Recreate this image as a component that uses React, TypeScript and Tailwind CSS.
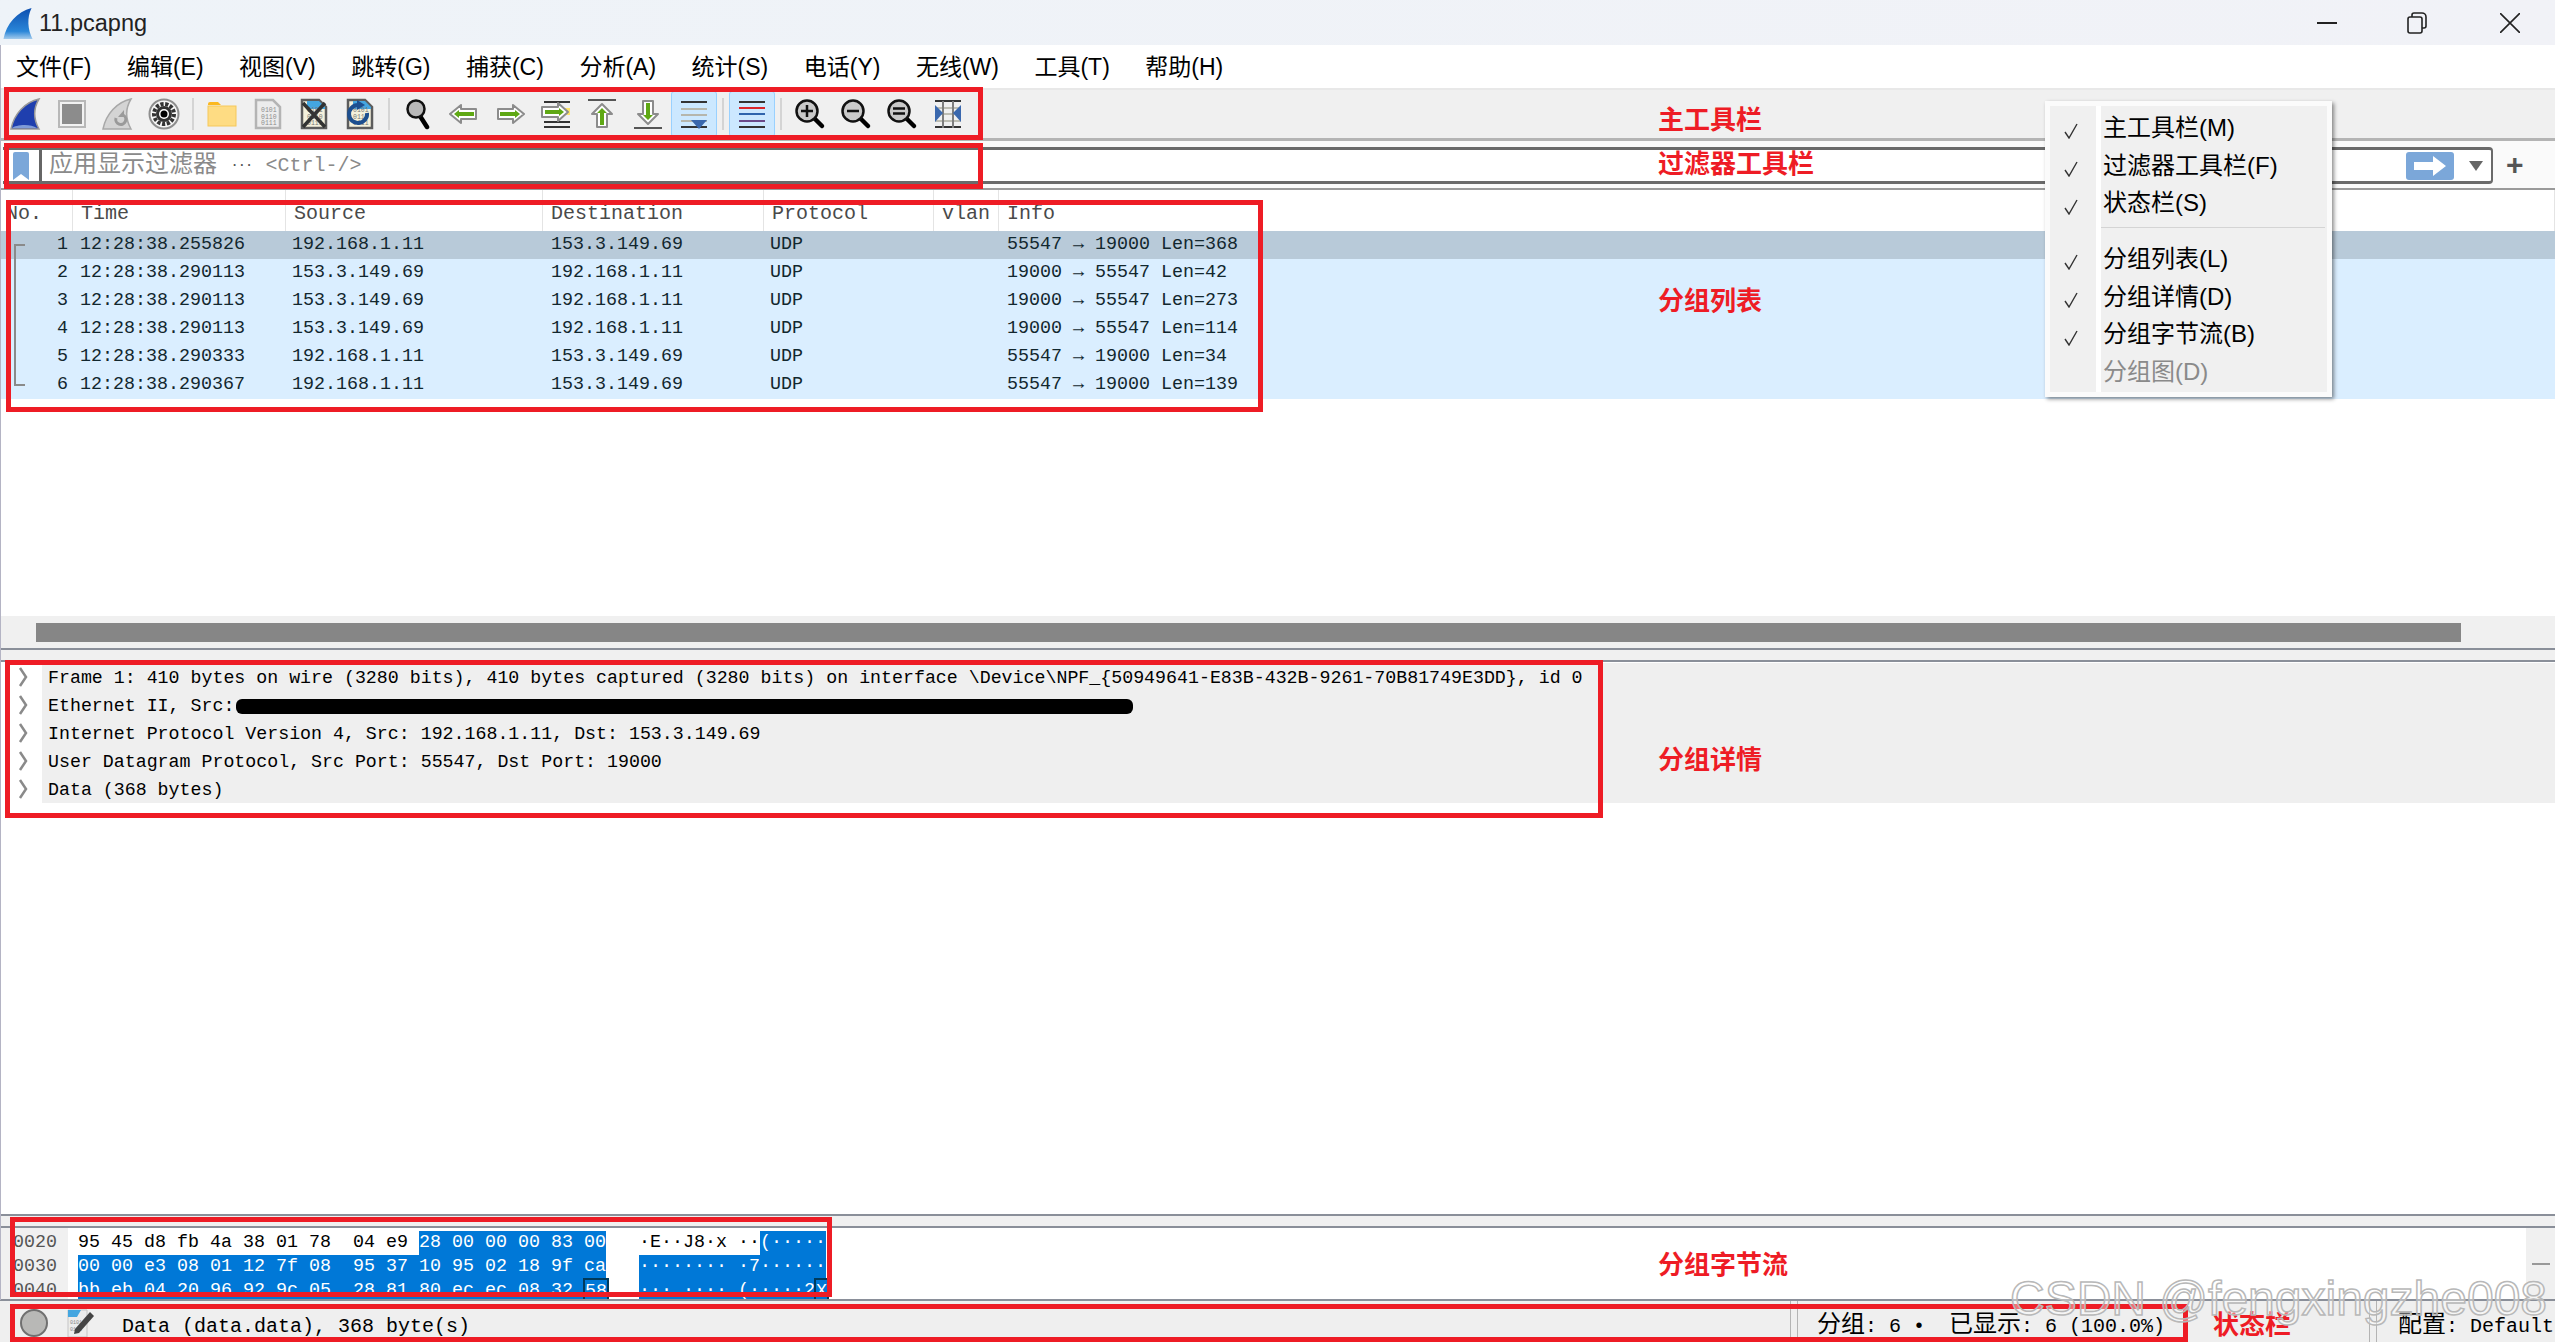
import type { ReactNode } from "react";

const MONO = "font-['Liberation_Mono','Noto_Sans_CJK_SC',monospace]";
const UI = "font-['Liberation_Sans','Noto_Sans_CJK_SC',sans-serif]";

const MENUS = ["文件(F)", "编辑(E)", "视图(V)", "跳转(G)", "捕获(C)", "分析(A)", "统计(S)", "电话(Y)", "无线(W)", "工具(T)", "帮助(H)"];

const PACKETS = [
  ["1", "12:28:38.255826", "192.168.1.11", "153.3.149.69", "55547 → 19000 Len=368"],
  ["2", "12:28:38.290113", "153.3.149.69", "192.168.1.11", "19000 → 55547 Len=42"],
  ["3", "12:28:38.290113", "153.3.149.69", "192.168.1.11", "19000 → 55547 Len=273"],
  ["4", "12:28:38.290113", "153.3.149.69", "192.168.1.11", "19000 → 55547 Len=114"],
  ["5", "12:28:38.290333", "192.168.1.11", "153.3.149.69", "55547 → 19000 Len=34"],
  ["6", "12:28:38.290367", "192.168.1.11", "153.3.149.69", "55547 → 19000 Len=139"],
];

const COLS = "grid grid-cols-[73px_213px_257px_221px_170px_65px_1fr]";

function Svg({ children }: { children: ReactNode }) {
  return (
    <svg width="32" height="32" viewBox="0 0 32 32" fill="none">
      {children}
    </svg>
  );
}

function Shark({ gray }: { gray?: boolean }) {
  if (gray) {
    return (
      <Svg>
        <path d="M29 1C15 4 4 16 1 31H29C24 22 23 11 29 1Z" fill="#d4d4d4" stroke="#a8a8a8" strokeWidth="1.5" />
        <path d="M14 20a5 5 0 1 0 7-3" stroke="#9a9a9a" strokeWidth="3" />
        <path d="M22 12v7h-6z" fill="#9a9a9a" />
      </Svg>
    );
  }
  return (
    <Svg>
      <path d="M29 1C15 4 4 16 1 31H29C24 22 23 11 29 1Z" fill="#1f3fae" stroke="#9a9a9a" strokeWidth="1.5" />
      <path d="M2 30C5 27 20 25 27 30Z" fill="#7f9bd8" />
    </Svg>
  );
}

function Doc({ children, dark }: { children?: ReactNode; dark?: boolean }) {
  return (
    <Svg>
      <path
        d="M4 2H21L28 9V30H4Z"
        fill={dark ? "#f4f1dc" : "#ececec"}
        stroke={dark ? "#5c5c5c" : "#b4b4b4"}
        strokeWidth="2.5"
      />
      {dark && <path d="M9 3H21L27 9V11H9Z" fill="#44a6e0" />}
      <text x="9" y="14" fontSize="6.5" fill={dark ? "#777" : "#8d8d8d"} fontFamily="Liberation Mono">0101</text>
      <text x="9" y="20.5" fontSize="6.5" fill={dark ? "#777" : "#8d8d8d"} fontFamily="Liberation Mono">0110</text>
      <text x="9" y="27" fontSize="6.5" fill={dark ? "#777" : "#8d8d8d"} fontFamily="Liberation Mono">0111</text>
      {children}
    </Svg>
  );
}

function Arrow({ path, inner }: { path: string; inner: string }) {
  return (
    <>
      <path d={path} fill="#fff" stroke="#8c8c8c" strokeWidth="2" strokeLinejoin="round" />
      <path d={inner} fill="#5fa814" />
    </>
  );
}

function Lens({ children }: { children?: ReactNode }) {
  return (
    <Svg>
      <path d="M20 20L28 28" stroke="#000" strokeWidth="4.5" strokeLinecap="round" />
      <circle cx="13" cy="13" r="10.5" fill="#c9c9c9" stroke="#111" strokeWidth="2.5" />
      {children}
    </Svg>
  );
}

const ICONS: ReactNode[] = [
  <Shark key="start" />,
  <Svg key="stop">
    <rect x="3" y="3" width="26" height="26" fill="#f2f2f2" stroke="#b8b8b8" strokeWidth="2" />
    <rect x="6" y="6" width="20" height="20" fill="#8c8c8c" />
  </Svg>,
  <Shark key="restart" gray />,
  <Svg key="options">
    <circle cx="16" cy="16" r="14.5" fill="#f6f6f6" stroke="#8e8e8e" strokeWidth="2" />
    <circle cx="16" cy="16" r="10" stroke="#333" strokeWidth="4" strokeDasharray="3.2 1.6" />
    <circle cx="16" cy="16" r="8" fill="#333" />
    <circle cx="16" cy="16" r="5" fill="#fff" />
    <circle cx="16" cy="16" r="3.5" fill="#000" />
  </Svg>,
  null,
  <Svg key="open">
    <path d="M2 6a2 2 0 0 1 2-2h8l3 3h-13z" fill="#fbb81f" />
    <rect x="2" y="8" width="28" height="20" fill="#fedc83" stroke="#f5c85b" />
  </Svg>,
  <Doc key="file" />,
  <Doc key="close" dark>
    <path d="M5 5L27 29M27 5L5 29" stroke="#333" strokeWidth="3.5" />
  </Doc>,
  <Doc key="reload" dark>
    <path d="M23 15a9 9 0 1 1-9-8" stroke="#1d4f8f" strokeWidth="4" />
    <path d="M13 2l8 5-8 5z" fill="#1d4f8f" />
  </Doc>,
  null,
  <Svg key="find">
    <path d="M18 18L25 29" stroke="#000" strokeWidth="4.5" strokeLinecap="round" />
    <circle cx="14" cy="11" r="8.5" fill="#b9b9b9" stroke="#111" strokeWidth="2.5" />
  </Svg>,
  <Svg key="prev">
    <Arrow path="M2 16L13 7V11H28V21H13V25Z" inner="M6 16L11 12V14H26V18H11V20Z" />
  </Svg>,
  <Svg key="next">
    <Arrow path="M30 16L19 7V11H4V21H19V25Z" inner="M26 16L21 12V14H6V18H21V20Z" />
  </Svg>,
  <Svg key="goto">
    <rect x="24" y="10" width="6" height="7" fill="#fde36a" />
    <path d="M4 4H30M4 24H30M4 29H30" stroke="#333" strokeWidth="2" />
    <Arrow path="M28 14L18 5V9H2V19H18V23Z" inner="M24 14L19 10V12H5V16H19V18Z" />
  </Svg>,
  <Svg key="first">
    <path d="M2 2H30" stroke="#555" strokeWidth="2" />
    <Arrow path="M16 6L26 16H21V29H11V16H6Z" inner="M16 10L21 15H18V27H14V15H11Z" />
  </Svg>,
  <Svg key="last">
    <path d="M2 30H30" stroke="#555" strokeWidth="2" />
    <Arrow path="M16 26L26 16H21V3H11V16H6Z" inner="M16 22L21 17H18V5H14V17H11Z" />
  </Svg>,
  <Svg key="autoscroll">
    <path d="M3 4H29M3 29H29" stroke="#333" strokeWidth="2" />
    <path d="M3 11H29M3 17H29M3 23H29" stroke="#b6b6ac" strokeWidth="2" />
    <path d="M13 22H29L21 31Z" fill="#3a68ae" />
  </Svg>,
  null,
  <Svg key="colorize">
    <path d="M3 4H29M3 29H29" stroke="#333" strokeWidth="2" />
    <path d="M3 10H29" stroke="#d9262c" strokeWidth="2" />
    <path d="M3 16H29" stroke="#2f64ad" strokeWidth="2" />
    <path d="M3 23H29" stroke="#6b4a8a" strokeWidth="2" />
  </Svg>,
  null,
  <Lens key="in">
    <path d="M7 13H19M13 7V19" stroke="#111" strokeWidth="2.5" />
  </Lens>,
  <Lens key="out">
    <path d="M7 13H19" stroke="#111" strokeWidth="2.5" />
  </Lens>,
  <Lens key="eq">
    <path d="M7 10.5H19M7 15.5H19" stroke="#111" strokeWidth="2.5" />
  </Lens>,
  <Svg key="resize">
    <path d="M3 3H29M3 29H29" stroke="#333" strokeWidth="2" />
    <path d="M3 10H29M3 16H29M3 23H29" stroke="#bdbdb3" strokeWidth="2" />
    <path d="M11 3V30M21 3V30" stroke="#7d7d7d" strokeWidth="2" />
    <path d="M3 7L11 15L3 24Z" fill="#3a68ae" />
    <path d="M29 7L21 15L29 24Z" fill="#3a68ae" />
  </Svg>,
];

function Toolbar() {
  return (
    <div className="flex h-[53px] shrink-0 items-start border-t-2 border-b-[3px] border-t-[#e8e8e8] border-b-[#b4b4b4] bg-[#f0f0f0] pl-[3px] pt-[1px]">
      {ICONS.map((icon, i) => {
        if (!icon) {
          return (
            <div key={i} className="flex h-[46px] w-[12px] items-center justify-center">
              <div className="h-[32px] w-[2px] bg-[#d4d4d4]" />
            </div>
          );
        }
        const active = i === 16 || i === 18;
        return (
          <div
            key={i}
            className={`flex h-[46px] w-[46px] items-center justify-center rounded-[3px] ${active ? "border border-[#99d1ff] bg-[#cce8ff]" : ""}`}
          >
            {icon}
          </div>
        );
      })}
    </div>
  );
}

function FilterBar() {
  return (
    <div className="flex h-[49px] shrink-0 items-start border-b-2 border-b-[#9a9a9a] bg-[#fafafa] pt-[6px]">
      <div className={`ml-[3px] flex h-[37px] w-[2490px] items-center rounded-r-[4px] border-y-[3px] border-r-2 border-[#6a6a6a] bg-white ${MONO}`}>
        <svg width="16" height="28" viewBox="0 0 16 28" className="ml-[10px]">
          <path d="M0 2a2 2 0 0 1 2-2H14a2 2 0 0 1 2 2V28L8 22L0 28Z" fill="#7ba7d9" />
        </svg>
        <div className="ml-[10px] h-full w-[3px] bg-[#666]" />
        <span className="ml-[7px] flex items-center whitespace-pre text-[20px] text-[#8a8a8a]">
          <span className="text-[24px]">应用显示过滤器</span>
          <span className="ml-[14px] text-[12px] font-bold text-[#555]">···</span>
          <span className="ml-[13px]">{"<Ctrl-/>"}</span>
        </span>
        <div className="ml-auto flex h-[28px] w-[48px] items-center justify-center rounded-[3px] bg-[#7ba7d9]">
          <svg width="34" height="20" viewBox="0 0 34 20">
            <path d="M1 6H20V0L33 10L20 20V14H1Z" fill="#fff" />
          </svg>
        </div>
        <svg width="14" height="10" viewBox="0 0 14 10" className="ml-[15px] mr-[8px]">
          <path d="M0 0H14L7 10Z" fill="#666" />
        </svg>
      </div>
      <span className="ml-[13px] mt-[3px] text-[30px] font-bold leading-[30px] text-[#555]">+</span>
    </div>
  );
}

function PacketList() {
  return (
    <div className={`relative flex h-[426px] shrink-0 flex-col bg-white ${MONO} text-[18.33px] leading-[28px]`}>
      <div className={`${COLS} h-[41px] shrink-0 text-[20px] leading-[48px] text-[#4a4a4a]`}>
        {["No.", "Time", "Source", "Destination", "Protocol", "vlan", "Info"].map((name, i) => (
          <div key={name} className={`whitespace-pre border-r border-[#e4e4e4] ${i === 0 ? "pl-[6px]" : "pl-[8px]"}`}>
            {name}
          </div>
        ))}
      </div>
      {PACKETS.map((p, i) => (
        <div key={p[0]} className={`${COLS} h-[28px] shrink-0 whitespace-pre text-[#12272e] ${i === 0 ? "bg-[#b8cad9]" : "bg-[#daeeff]"}`}>
          <div className="pr-[5px] text-right">{p[0]}</div>
          <div className="pl-[7px]">{p[1]}</div>
          <div className="pl-[6px]">{p[2]}</div>
          <div className="pl-[8px]">{p[3]}</div>
          <div className="pl-[6px]">UDP</div>
          <div />
          <div className="pl-[8px]">{p[4]}</div>
        </div>
      ))}
      <svg width="14" height="146" viewBox="0 0 14 146" className="absolute left-[13px] top-[53px]">
        <path d="M12 2H2V142H12" stroke="#8a8a8a" strokeWidth="2" fill="none" />
      </svg>
    </div>
  );
}

function HScrollbar() {
  return (
    <div className="flex h-[34px] shrink-0 items-center border-b-2 border-[#8a8f99] bg-[#f0f0f0] pl-[36px]">
      <div className="h-[19px] w-[2425px] bg-[#868686]" />
    </div>
  );
}

function DetailPane() {
  const rows: ReactNode[] = [
    "Frame 1: 410 bytes on wire (3280 bits), 410 bytes captured (3280 bits) on interface \\Device\\NPF_{50949641-E83B-432B-9261-70B81749E3DD}, id 0",
    <span key="eth" className="flex items-center">
      Ethernet II, Src:
      <span className="ml-[2px] inline-block h-[15px] w-[897px] rounded-[6px] bg-black" />
    </span>,
    "Internet Protocol Version 4, Src: 192.168.1.11, Dst: 153.3.149.69",
    "User Datagram Protocol, Src Port: 55547, Dst Port: 19000",
    "Data (368 bytes)",
  ];
  return (
    <div className={`flex h-[554px] shrink-0 flex-col border-b-2 border-[#8a8f99] bg-white pt-[1px] ${MONO} text-[18.28px] leading-[28px] text-black`}>
      {rows.map((row, i) => (
        <div key={i} className="flex h-[28px] shrink-0">
          <div className="flex w-[42px] items-center justify-center pl-[4px]">
            <svg width="10" height="20" viewBox="0 0 10 20">
              <path d="M2 1L8 10L2 19" stroke="#8a8a8a" strokeWidth="2.5" fill="none" />
            </svg>
          </div>
          <div className="flex-1 whitespace-pre bg-[#efefef] pl-[6px] pt-[1px]">{row}</div>
        </div>
      ))}
    </div>
  );
}

const HEX_ROWS = [
  { off: "0020", plain: "95 45 d8 fb 4a 38 01 78  04 e9 ", sel: "28 00 00 00 83 00", asciiPlain: "·E··J8·x ··", asciiSel: "(·····" },
  { off: "0030", plain: "", sel: "00 00 e3 08 01 12 7f 08  95 37 10 95 02 18 9f ca", asciiPlain: "", asciiSel: "········ ·7······" },
  { off: "0040", plain: "", sel: "bb eb 04 20 96 92 9c 05  28 81 80 ec ec 08 32 ", asciiPlain: "", asciiSel: "··· ···· (·····2" },
];

function HexPane() {
  return (
    <div className={`flex h-[73px] shrink-0 overflow-hidden border-b-2 border-[#8a8f99] bg-white ${MONO} text-[18.33px] leading-[24px]`}>
      <div className="w-[68px] shrink-0 bg-[#f0f0f0] pl-[13px] pt-[3px] text-[#555]">
        {HEX_ROWS.map((r) => (
          <div key={r.off}>{r.off}</div>
        ))}
      </div>
      <div className="ml-[10px] w-[527px] shrink-0 whitespace-pre pt-[3px] text-black">
        {HEX_ROWS.map((r, i) => (
          <div key={r.off} className="flex">
            <span>{r.plain}</span>
            <span className="bg-[#0078d7] text-white">{r.sel}</span>
            {i === 2 && <span className="-m-px border-2 border-[#003a5c] bg-[#0078d7] text-white">58</span>}
          </div>
        ))}
      </div>
      <div className="ml-[34px] w-[187px] shrink-0 whitespace-pre pt-[3px] text-black">
        {HEX_ROWS.map((r, i) => (
          <div key={r.off} className="flex">
            <span>{r.asciiPlain}</span>
            <span className="bg-[#0078d7] text-white">{r.asciiSel}</span>
            {i === 2 && <span className="-m-px border-2 border-[#003a5c] bg-[#0078d7] text-white">X</span>}
          </div>
        ))}
      </div>
      <div className="ml-auto flex w-[29px] shrink-0 items-center justify-center bg-[#f0f0f0]">
        <div className="h-[2px] w-[18px] bg-[#999]" />
      </div>
    </div>
  );
}

function StatusBar() {
  return (
    <div className={`flex h-[41px] shrink-0 items-center whitespace-pre bg-[#efefef] ${MONO} text-[20px] text-black`}>
      <div className="ml-[20px] mt-[3px] h-[28px] w-[28px] rounded-full border-2 border-[#707070] bg-[#b8b8b6]" />
      <svg width="28" height="29" viewBox="0 0 28 29" className="ml-[19px] mt-[3px]">
        <path d="M1 1H20V28H1Z" fill="#ececec" stroke="#c4c4c4" />
        <path d="M1 1H14L10 8H1Z" fill="#44a6e0" />
        <text x="3" y="15" fontSize="5" fill="#888" fontFamily="Liberation Mono">0101</text>
        <text x="3" y="22" fontSize="5" fill="#888" fontFamily="Liberation Mono">0110</text>
        <path d="M8 20L23 3L27 7L12 24L7 25Z" fill="#444" />
      </svg>
      <span className="ml-[27px] mt-[10px] w-[1668px]">Data (data.data), 368 byte(s)</span>
      <div className="h-full w-[8px] border-x border-[#b4b4b4]" />
      <span className="ml-[19px] mt-[8px] w-[552px]">
        <span className="text-[24px]">分组</span>: 6 •  <span className="text-[24px]">已显示</span>: 6 (100.0%)
      </span>
      <div className="h-full w-[8px] border-x border-[#b4b4b4]" />
      <span className="ml-[21px] mt-[8px]">
        <span className="text-[24px]">配置</span>: Default
      </span>
    </div>
  );
}

function ViewMenu() {
  const Row = ({ label, checked = true, disabled }: { label?: string; checked?: boolean; disabled?: boolean }) => (
    <div className="flex h-[37.7px]">
      <div className="flex w-[51px] shrink-0 items-center justify-center border-r-[5px] border-white pr-[5px] pt-[5px]">
        {checked && (
          <svg width="14" height="16" viewBox="0 0 14 16">
            <path d="M1 9L5 15L13 1" stroke="#333" strokeWidth="1.4" fill="none" />
          </svg>
        )}
      </div>
      <div className={`flex-1 pl-[2px] text-[24px] leading-[36px] ${disabled ? "text-[#8a8a8a]" : "text-black"}`}>{label}</div>
    </div>
  );
  return (
    <div className={`absolute left-[2045px] top-[101px] w-[287px] bg-[#fbfbfb] p-[5px] shadow-[2px_2px_4px_rgba(0,0,0,0.45)] ${UI}`}>
      <div className="bg-[#f0f0f0]">
        <div className="flex h-[4px]">
          <div className="w-[51px] border-r-[5px] border-white" />
        </div>
        <Row label="主工具栏(M)" />
        <Row label="过滤器工具栏(F)" />
        <Row label="状态栏(S)" />
        <div className="flex h-[18px]">
          <div className="w-[51px] border-r-[5px] border-white" />
          <div className="mt-[4px] mr-[2px] h-[1px] flex-1 bg-[#d4d4d4]" />
        </div>
        <Row label="分组列表(L)" />
        <Row label="分组详情(D)" />
        <Row label="分组字节流(B)" />
        <Row label="分组图(D)" checked={false} disabled />
      </div>
    </div>
  );
}

const MARKS = [
  "left-[4px] top-[87px] w-[979px] h-[53px]",
  "left-[4px] top-[143px] w-[979px] h-[46px]",
  "left-[6px] top-[200px] w-[1257px] h-[212px]",
  "left-[5px] top-[660px] w-[1598px] h-[158px]",
  "left-[10px] top-[1217px] w-[822px] h-[80px]",
  "left-[10px] top-[1304px] w-[2178px] h-[38px]",
];

const LABELS = [
  { text: "主工具栏", pos: "left-[1658px] top-[102px]" },
  { text: "过滤器工具栏", pos: "left-[1658px] top-[146px]" },
  { text: "分组列表", pos: "left-[1658px] top-[283px]" },
  { text: "分组详情", pos: "left-[1658px] top-[742px]" },
  { text: "分组字节流", pos: "left-[1658px] top-[1247px]" },
  { text: "状态栏", pos: "left-[2213px] top-[1307px]" },
];

export default function App() {
  return (
    <div className={`relative flex h-[1342px] w-[2555px] flex-col overflow-hidden bg-white ${UI}`}>
      <div className="flex h-[45px] shrink-0 items-center bg-gradient-to-r from-[#eef3f8] to-[#f1f2f7]">
        <svg width="30" height="31" viewBox="0 0 30 32" className="ml-[3px] mt-[2px]">
          <defs>
            <linearGradient id="fin" x1="0" y1="0" x2="0" y2="1">
              <stop offset="0" stopColor="#0d4fb0" />
              <stop offset="0.75" stopColor="#2a86d8" />
              <stop offset="1" stopColor="#a4cbec" />
            </linearGradient>
          </defs>
          <path d="M29 0C14 4 3 16 0 32H30C25 22 24 10 29 0Z" fill="url(#fin)" />
        </svg>
        <span className="ml-[6px] mt-[3px] text-[23.5px] text-[#222]">11.pcapng</span>
        <div className="ml-auto flex items-center">
          <svg width="20" height="20" viewBox="0 0 20 20" className="mr-[70px]">
            <path d="M0 10H20" stroke="#222" strokeWidth="2" />
          </svg>
          <svg width="20" height="22" viewBox="0 0 20 22" className="mr-[73px]">
            <rect x="1" y="5" width="14" height="16" rx="2" fill="none" stroke="#222" strokeWidth="1.6" />
            <path d="M5 5V3a2 2 0 0 1 2-2h8a4 4 0 0 1 4 4v9a2 2 0 0 1-2 2h-2" fill="none" stroke="#222" strokeWidth="1.6" />
          </svg>
          <svg width="20" height="20" viewBox="0 0 20 20" className="mr-[35px]">
            <path d="M0 0L20 20M20 0L0 20" stroke="#222" strokeWidth="1.6" />
          </svg>
        </div>
      </div>

      <div className="flex h-[43px] shrink-0 items-center gap-[35.5px] bg-white pl-[16px] pt-[2px] text-[23px] text-black">
        {MENUS.map((m) => (
          <span key={m}>{m}</span>
        ))}
      </div>

      <Toolbar />
      <FilterBar />
      <PacketList />
      <HScrollbar />
      <div className="h-[12px] shrink-0 border-b-2 border-[#8a8f99] bg-[#f0f0f0]" />
      <DetailPane />
      <div className="h-[12px] shrink-0 border-b-2 border-[#8a8f99] bg-[#f0f0f0]" />
      <HexPane />
      <StatusBar />

      <ViewMenu />

      <div className="absolute bottom-[42px] left-0 top-[45px] w-px bg-[#b4b4c4]" />

      {MARKS.map((m) => (
        <div key={m} className={`pointer-events-none absolute border-[5px] border-[#ee1c25] ${m}`} />
      ))}
      {LABELS.map((l) => (
        <span key={l.text} className={`absolute text-[26px] font-bold leading-[36px] text-[#ee1c25] ${l.pos}`}>
          {l.text}
        </span>
      ))}

      <span className="absolute left-[2010px] top-[1269px] whitespace-nowrap text-[48px] leading-[60px] text-white/40 [-webkit-text-stroke:1.5px_#b8b8b8]">
        CSDN @fengxingzhe008
      </span>
    </div>
  );
}
